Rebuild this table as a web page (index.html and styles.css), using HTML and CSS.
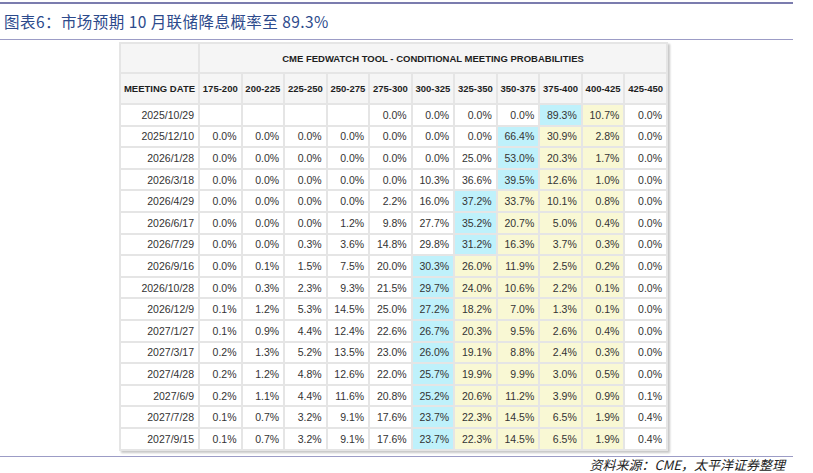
FILE: index.html
```html
<!DOCTYPE html>
<html lang="zh-CN">
<head>
<meta charset="utf-8">
<title>图表6</title>
<link rel="stylesheet" href="styles.css">
</head>
<body>
<div class="page">
  <div class="rule-top"></div>
  <div class="title">图表6：市场预期 10 月联储降息概率至 89.3%</div>
  <div class="rule"></div>
  <div class="table-wrap">
    <table class="fw">
      <colgroup>
        <col class="c-date">
        <col><col><col><col><col><col><col><col><col><col><col>
      </colgroup>
      <thead>
        <tr class="h1"><th></th><th colspan="11">CME FEDWATCH TOOL - CONDITIONAL MEETING PROBABILITIES</th></tr>
        <tr class="h2"><th>MEETING DATE</th><th>175-200</th><th>200-225</th><th>225-250</th><th>250-275</th><th>275-300</th><th>300-325</th><th>325-350</th><th>350-375</th><th>375-400</th><th>400-425</th><th>425-450</th></tr>
      </thead>
      <tbody>
        <tr><td>2025/10/29</td><td></td><td></td><td></td><td></td><td>0.0%</td><td>0.0%</td><td>0.0%</td><td>0.0%</td><td class="b">89.3%</td><td class="y">10.7%</td><td>0.0%</td></tr>
        <tr><td>2025/12/10</td><td>0.0%</td><td>0.0%</td><td>0.0%</td><td>0.0%</td><td>0.0%</td><td>0.0%</td><td>0.0%</td><td class="b">66.4%</td><td class="y">30.9%</td><td class="y">2.8%</td><td>0.0%</td></tr>
        <tr><td>2026/1/28</td><td>0.0%</td><td>0.0%</td><td>0.0%</td><td>0.0%</td><td>0.0%</td><td>0.0%</td><td>25.0%</td><td class="b">53.0%</td><td class="y">20.3%</td><td class="y">1.7%</td><td>0.0%</td></tr>
        <tr><td>2026/3/18</td><td>0.0%</td><td>0.0%</td><td>0.0%</td><td>0.0%</td><td>0.0%</td><td>10.3%</td><td>36.6%</td><td class="b">39.5%</td><td class="y">12.6%</td><td class="y">1.0%</td><td>0.0%</td></tr>
        <tr><td>2026/4/29</td><td>0.0%</td><td>0.0%</td><td>0.0%</td><td>0.0%</td><td>2.2%</td><td>16.0%</td><td class="b">37.2%</td><td class="y">33.7%</td><td class="y">10.1%</td><td class="y">0.8%</td><td>0.0%</td></tr>
        <tr><td>2026/6/17</td><td>0.0%</td><td>0.0%</td><td>0.0%</td><td>1.2%</td><td>9.8%</td><td>27.7%</td><td class="b">35.2%</td><td class="y">20.7%</td><td class="y">5.0%</td><td class="y">0.4%</td><td>0.0%</td></tr>
        <tr><td>2026/7/29</td><td>0.0%</td><td>0.0%</td><td>0.3%</td><td>3.6%</td><td>14.8%</td><td>29.8%</td><td class="b">31.2%</td><td class="y">16.3%</td><td class="y">3.7%</td><td class="y">0.3%</td><td>0.0%</td></tr>
        <tr><td>2026/9/16</td><td>0.0%</td><td>0.1%</td><td>1.5%</td><td>7.5%</td><td>20.0%</td><td class="b">30.3%</td><td class="y">26.0%</td><td class="y">11.9%</td><td class="y">2.5%</td><td class="y">0.2%</td><td>0.0%</td></tr>
        <tr><td>2026/10/28</td><td>0.0%</td><td>0.3%</td><td>2.3%</td><td>9.3%</td><td>21.5%</td><td class="b">29.7%</td><td class="y">24.0%</td><td class="y">10.6%</td><td class="y">2.2%</td><td class="y">0.1%</td><td>0.0%</td></tr>
        <tr><td>2026/12/9</td><td>0.1%</td><td>1.2%</td><td>5.3%</td><td>14.5%</td><td>25.0%</td><td class="b">27.2%</td><td class="y">18.2%</td><td class="y">7.0%</td><td class="y">1.3%</td><td class="y">0.1%</td><td>0.0%</td></tr>
        <tr><td>2027/1/27</td><td>0.1%</td><td>0.9%</td><td>4.4%</td><td>12.4%</td><td>22.6%</td><td class="b">26.7%</td><td class="y">20.3%</td><td class="y">9.5%</td><td class="y">2.6%</td><td class="y">0.4%</td><td>0.0%</td></tr>
        <tr><td>2027/3/17</td><td>0.2%</td><td>1.3%</td><td>5.2%</td><td>13.5%</td><td>23.0%</td><td class="b">26.0%</td><td class="y">19.1%</td><td class="y">8.8%</td><td class="y">2.4%</td><td class="y">0.3%</td><td>0.0%</td></tr>
        <tr><td>2027/4/28</td><td>0.2%</td><td>1.2%</td><td>4.8%</td><td>12.6%</td><td>22.0%</td><td class="b">25.7%</td><td class="y">19.9%</td><td class="y">9.9%</td><td class="y">3.0%</td><td class="y">0.5%</td><td>0.0%</td></tr>
        <tr><td>2027/6/9</td><td>0.2%</td><td>1.1%</td><td>4.4%</td><td>11.6%</td><td>20.8%</td><td class="b">25.2%</td><td class="y">20.6%</td><td class="y">11.2%</td><td class="y">3.9%</td><td class="y">0.9%</td><td>0.1%</td></tr>
        <tr><td>2027/7/28</td><td>0.1%</td><td>0.7%</td><td>3.2%</td><td>9.1%</td><td>17.6%</td><td class="b">23.7%</td><td class="y">22.3%</td><td class="y">14.5%</td><td class="y">6.5%</td><td class="y">1.9%</td><td>0.4%</td></tr>
        <tr><td>2027/9/15</td><td>0.1%</td><td>0.7%</td><td>3.2%</td><td>9.1%</td><td>17.6%</td><td class="b">23.7%</td><td class="y">22.3%</td><td class="y">14.5%</td><td class="y">6.5%</td><td class="y">1.9%</td><td>0.4%</td></tr>
      </tbody>
    </table>
  </div>
  <div class="rule rule-bottom"></div>
  <div class="source">资料来源：CME，太平洋证券整理</div>
</div>
</body>
</html>
```

FILE: styles.css
```css
html, body {
  margin: 0;
  padding: 0;
  background: #ffffff;
}

.page {
  width: 813px;
  height: 473px;
  font-family: "Liberation Sans", Arial, sans-serif;
}

.rule-top {
  width: 793px;
  height: 2px;
  margin-top: 2px;
  background: #7b7cae;
}

.title {
  height: 35px;
  padding-left: 4px;
  line-height: 35px;
  font-family: "Noto Sans CJK SC", sans-serif;
  font-size: 15.5px;
  letter-spacing: 0.45px;
  color: #2c4a8c;
  white-space: nowrap;
}

.rule {
  width: 793px;
  height: 1px;
  background: #9c9cc6;
}

.table-wrap {
  padding: 2px 0 0 119px;
  height: 410px;
}

.fw {
  border-collapse: collapse;
  table-layout: fixed;
  width: 549px;
  box-shadow: 2px 2px 2px rgba(0, 0, 0, 0.22);
  font-size: 10.5px;
  color: #333333;
}

.fw .c-date {
  width: 79px;
}

.fw th,
.fw td {
  border: 2px solid #e5e5e5;
  padding: 0 4px 0 0;
  white-space: nowrap;
  overflow: hidden;
}

.fw th {
  background: #f5f5f5;
  font-weight: bold;
  font-size: 9.5px;
  color: #1e1e1e;
  text-align: center;
  padding: 0;
}

.fw .h1 {
  height: 30px;
}

.fw .h2 {
  height: 31px;
}

.fw tbody tr {
  height: 21.6px;
}

.fw td {
  text-align: right;
  background: #ffffff;
}

.fw td.b {
  background: #bff1fb;
}

.fw td.y {
  background: #f9f8d4;
}

.rule-bottom {
  margin-top: 4px;
}

.source {
  width: 785px;
  height: 15px;
  text-align: right;
  font-family: "Noto Sans CJK SC", sans-serif;
  font-style: italic;
  font-size: 13px;
  line-height: 15px;
  color: #222222;
}
```
